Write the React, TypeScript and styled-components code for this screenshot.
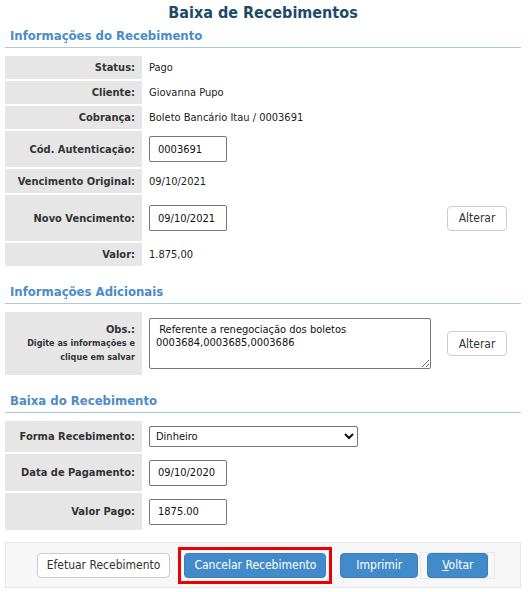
import React from "react";
import styled, { createGlobalStyle } from "styled-components";

const GlobalStyle = createGlobalStyle`
  body {
    margin: 0;
    background: #fff;
    font-family: "DejaVu Sans Condensed", "DejaVu Sans", "Liberation Sans", sans-serif;
    font-stretch: condensed;
    font-size: 11px;
    color: #222;
  }
`;

const Page = styled.div`
  width: 516px;
  padding: 0 5px;
`;

const Title = styled.h1`
  margin: 0;
  height: 24px;
  line-height: 25px;
  text-align: center;
  font-size: 16px;
  font-weight: bold;
  color: #1b4a6b;
`;

const SectionHeader = styled.h2<{ $top?: number }>`
  margin: ${(p) => p.$top ?? 0}px 0 8px;
  height: 23px;
  line-height: 23px;
  padding-left: 5px;
  font-size: 13px;
  font-weight: bold;
  color: #4a8bc9;
  border-bottom: 1px solid #a5cbe1;
`;

const FormGrid = styled.div`
  display: grid;
  grid-template-columns: 137px 1fr;
  column-gap: 2px;
  row-gap: 2px;
`;

const Label = styled.div<{ $h: number }>`
  height: ${(p) => p.$h}px;
  background: #e6e6e6;
  display: flex;
  flex-direction: column;
  align-items: flex-end;
  justify-content: center;
  padding-right: 7px;
  font-weight: bold;
  color: #333;
  text-align: right;
`;

const Hint = styled.span`
  font-size: 9px;
  line-height: 14px;
`;

const Value = styled.div`
  display: flex;
  align-items: center;
  justify-content: space-between;
  padding-left: 5px;
  padding-right: 14px;
`;

const TextInput = styled.input`
  box-sizing: border-box;
  width: 78px;
  height: 26px;
  border: 1px solid #767676;
  border-radius: 2px;
  padding: 0 8px;
  font: inherit;
  color: #111;
`;

const Select = styled.select`
  box-sizing: border-box;
  width: 209px;
  height: 21px;
  border: 1px solid #767676;
  border-radius: 2px;
  padding: 0 2px;
  font: inherit;
  color: #111;
  background: #fff;
`;

const Notes = styled.textarea`
  box-sizing: border-box;
  width: 282px;
  height: 51px;
  border: 1px solid #767676;
  border-radius: 2px;
  padding: 4px 6px;
  font: inherit;
  color: #111;
  resize: both;
`;

const Button = styled.button<{ $primary?: boolean; $min?: number }>`
  height: 25px;
  min-width: ${(p) => p.$min ?? 0}px;
  padding: 0 9px;
  border-radius: 4px;
  font: inherit;
  font-size: 12px;
  cursor: pointer;
  border: 1px solid ${(p) => (p.$primary ? "#3a7fc0" : "#ccc")};
  background: ${(p) => (p.$primary ? "#428bca" : "#fff")};
  color: ${(p) => (p.$primary ? "#fff" : "#333")};
`;

const ButtonBar = styled.div`
  margin-top: 12px;
  height: 44px;
  padding-left: 6px;
  background: #f7f7f7;
  border: 1px solid #e6e6e6;
  display: flex;
  align-items: center;
  justify-content: center;
  gap: 8px;
`;

const Highlight = styled.span`
  display: inline-flex;
  padding: 3px;
  border: 3px solid #e00;
`;

const Framed = styled.span`
  display: inline-flex;
  margin-left: -6px;
  padding: 0 6px;
  border: 1px solid #e8e8e8;
`;

export default function App() {
  return (
    <>
      <GlobalStyle />
      <Page>
        <Title>Baixa de Recebimentos</Title>

        <SectionHeader>Informações do Recebimento</SectionHeader>
        <FormGrid>
          <Label $h={23}>Status:</Label>
          <Value>Pago</Value>
          <Label $h={23}>Cliente:</Label>
          <Value>Giovanna Pupo</Value>
          <Label $h={23}>Cobrança:</Label>
          <Value>Boleto Bancário Itau / 0003691</Value>
          <Label $h={36}>Cód. Autenticação:</Label>
          <Value>
            <TextInput defaultValue="0003691" />
          </Value>
          <Label $h={24}>Vencimento Original:</Label>
          <Value>09/10/2021</Value>
          <Label $h={46}>Novo Vencimento:</Label>
          <Value>
            <TextInput defaultValue="09/10/2021" />
            <Button $min={60}>Alterar</Button>
          </Value>
          <Label $h={23}>Valor:</Label>
          <Value>1.875,00</Value>
        </FormGrid>

        <SectionHeader $top={14}>Informações Adicionais</SectionHeader>
        <FormGrid>
          <Label $h={63}>
            <span>Obs.:</span>
            <Hint>Digite as informações e</Hint>
            <Hint>clique em salvar</Hint>
          </Label>
          <Value>
            <Notes
              defaultValue={" Referente a renegociação dos boletos\n0003684,0003685,0003686"}
            />
            <Button $min={60}>Alterar</Button>
          </Value>
        </FormGrid>

        <SectionHeader $top={14}>Baixa do Recebimento</SectionHeader>
        <FormGrid>
          <Label $h={31}>Forma Recebimento:</Label>
          <Value>
            <Select defaultValue="Dinheiro">
              <option>Dinheiro</option>
              <option>Cheque</option>
              <option>Cartão</option>
            </Select>
          </Value>
          <Label $h={37}>Data de Pagamento:</Label>
          <Value>
            <TextInput defaultValue="09/10/2020" />
          </Value>
          <Label $h={37}>Valor Pago:</Label>
          <Value>
            <TextInput defaultValue="1875.00" />
          </Value>
        </FormGrid>

        <ButtonBar>
          <Button>Efetuar Recebimento</Button>
          <Highlight>
            <Button $primary>Cancelar Recebimento</Button>
          </Highlight>
          <Button $primary $min={78}>
            Imprimir
          </Button>
          <Framed>
            <Button $primary $min={61}>
              <u>V</u>oltar
            </Button>
          </Framed>
        </ButtonBar>
      </Page>
    </>
  );
}
